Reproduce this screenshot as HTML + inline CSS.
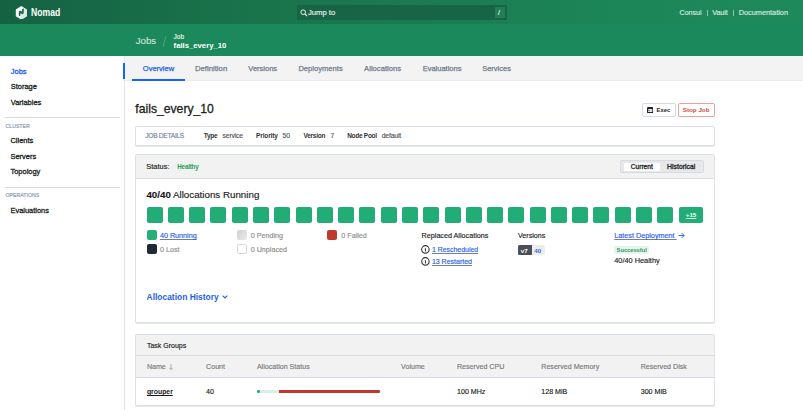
<!DOCTYPE html>
<html><head><meta charset="utf-8">
<style>
*{box-sizing:border-box}
html,body{margin:0;padding:0}
body{width:803px;height:410px;overflow:hidden;position:relative;background:#fff;font-family:"Liberation Sans",sans-serif;color:#0a0a0a}
.a{position:absolute}
.t{position:absolute;white-space:nowrap;line-height:10px;height:10px;margin-top:0.9px;-webkit-text-stroke:0.15px currentColor}
.b{-webkit-text-stroke:0}
.b{font-weight:bold}
#hdr{left:0;top:0;width:803px;height:24px;background:linear-gradient(to right,#156243 0%,#187049 25%,#1a7a50 50%,#1c8557 75%,#1e8a5b 100%)}
#sub{left:0;top:24px;width:803px;height:32px;background:#1b895b}
#side{left:0;top:56px;width:125px;height:354px;background:#fff;border-right:1px solid #e3e5e8}
#tabs{left:125px;top:56px;width:678px;height:25px;background:#f3f3f3;border-bottom:1px solid #ececec}
.side{font-size:7.45px;color:#1c1f24;-webkit-text-stroke:0.3px #1c1f24;margin-top:0.4px}
.sidesec{font-size:5.2px;color:#8797ae;transform:scaleY(1.16);transform-origin:0 50%}
.div{position:absolute;left:5px;width:115px;height:1px;background:#d6dbe3}
.tab{font-size:7.5px;color:#6f7b8c;top:63px;-webkit-text-stroke:0.25px #6f7b8c}
.box{position:absolute;border:1px solid #dbe0e8;border-radius:2px;background:#fff}
.kv{font-size:6.5px;top:130.2px;color:#333}
.kvv{font-size:6.8px;color:#555}
.sq{position:absolute;top:207px;width:16px;height:16px;border-radius:2px;background:#22ad77}
.leg{position:absolute;width:10px;height:10px;border-radius:2px}
.lt{font-size:7.2px;color:#8e8e8e}
.lnk{color:#1f60ec;text-decoration:underline;text-decoration-color:#6f7fa3;text-decoration-thickness:0.6px;text-underline-offset:1px}
.th{font-size:7.1px;color:#7a7a7a;top:361.5px}
.td{font-size:7.1px;color:#1c1c1c;top:386.4px}
</style></head><body>
<div id="hdr" class="a"></div>
<!-- logo -->
<svg class="a" style="left:14.6px;top:5.6px" width="12.6" height="13.6" viewBox="0 0 16 16" preserveAspectRatio="none">
<path d="M8,0 L15,4 V12 L8,16 L1,12 V4 Z" fill="#fff"/>
<path d="M8.9,3.95 L11.12,2.69 L15,4 V12 L8,16 L7,11.03 L7,8.4 L9.25,9.66 Z" fill="#dfe9e3"/>
<path d="M11.12,2.69 V8.58 L9.25,9.66 L7,8.4 V11.03 L4.88,12.34 V6.45 L6.57,5.42 L8.89,6.7 V3.95 Z" fill="#1a6b48"/>
</svg>
<div class="t b" style="left:30.9px;top:7.3px;font-size:10.0px;color:#fff;transform:scaleX(0.862);transform-origin:0 0">Nomad</div>
<!-- search -->
<div class="a" style="left:297px;top:5px;width:210px;height:15px;background:#176446;border-radius:1px"></div>
<svg class="a" style="left:299.5px;top:8.5px" width="8" height="8" viewBox="0 0 8 8"><circle cx="3.2" cy="3.2" r="2.3" stroke="#e8efe9" stroke-width="1" fill="none"/><line x1="4.9" y1="4.9" x2="7" y2="7" stroke="#e8efe9" stroke-width="1.1"/></svg>
<div class="t" style="left:307.9px;top:7px;font-size:7.7px;color:#e9f1ec">Jump to</div>
<div class="a" style="left:494.7px;top:7.1px;width:10px;height:10.8px;background:#237e58;border-radius:1px"></div>
<div class="t" style="left:498px;top:7.5px;font-size:7px;color:#e9f1ec">/</div>
<div class="t" style="left:679.6px;top:7.4px;font-size:7.04px;color:#dbe9e1">Consul</div>
<div class="a" style="left:707px;top:9.5px;width:0.7px;height:6.5px;background:#8fc2a8"></div>
<div class="t" style="left:712.2px;top:7.4px;font-size:7.1px;color:#dbe9e1">Vault</div>
<div class="a" style="left:733px;top:9.5px;width:0.7px;height:6.5px;background:#8fc2a8"></div>
<div class="t" style="left:738.7px;top:7.4px;font-size:7.33px;color:#dbe9e1">Documentation</div>

<div id="sub" class="a"></div>
<div class="t" style="left:135.8px;top:35.3px;font-size:9.6px;color:#c9e2d5">Jobs</div>
<div class="a" style="left:164.1px;top:36.2px;width:1.3px;height:10.5px;background:#45a87a;transform:skewX(-14deg)"></div>
<div class="t" style="left:173.6px;top:31.3px;font-size:6.5px;color:#e8f3ed">Job</div>
<div class="t b" style="left:173.6px;top:40.6px;font-size:7.71px;color:#fff">fails_every_10</div>

<div id="side" class="a"></div>
<div class="a" style="left:123px;top:63px;width:2px;height:16px;background:#1563ff"></div>
<div class="t side" style="left:10.8px;top:66.6px;color:#1f60ec;-webkit-text-stroke:0.3px #1f60ec">Jobs</div>
<div class="t side" style="left:10.8px;top:82px">Storage</div>
<div class="t side" style="left:10.8px;top:97.7px">Variables</div>
<div class="div" style="top:117.2px"></div>
<div class="t sidesec" style="left:5.5px;top:120.4px">CLUSTER</div>
<div class="t side" style="left:10.5px;top:135.3px">Clients</div>
<div class="t side" style="left:10.5px;top:151.6px">Servers</div>
<div class="t side" style="left:10.5px;top:167px">Topology</div>
<div class="div" style="top:187.2px"></div>
<div class="t sidesec" style="left:5.5px;top:189.6px">OPERATIONS</div>
<div class="t side" style="left:10.5px;top:206px">Evaluations</div>

<div id="tabs" class="a"></div>
<div class="t tab" style="left:142.8px;color:#1f60ec;-webkit-text-stroke:0.25px #1f60ec">Overview</div>
<div class="a" style="left:132px;top:79px;width:53px;height:2px;background:#1563ff"></div>
<div class="t tab" style="left:194.9px;font-size:7.75px">Definition</div>
<div class="t tab" style="left:248.3px">Versions</div>
<div class="t tab" style="left:298.4px;font-size:7.6px">Deployments</div>
<div class="t tab" style="left:364.1px;font-size:7.65px">Allocations</div>
<div class="t tab" style="left:422.7px">Evaluations</div>
<div class="t tab" style="left:482.2px">Services</div>

<div class="t" style="left:135.3px;top:103.2px;font-size:12.2px;color:#222;-webkit-text-stroke:0.3px #222">fails_every_10</div>

<!-- buttons -->
<div class="box" style="left:642px;top:103px;width:33.5px;height:13.5px;border-color:#d5dae2"></div>
<svg class="a" style="left:646.9px;top:106.7px" width="6.4" height="6.2" viewBox="0 0 6.4 6.2"><rect x="0" y="0" width="6.4" height="6.2" rx="1.3" fill="#1f2328"/><rect x="1.1" y="2.1" width="4.2" height="2.9" rx="0.3" fill="#e4e4e4"/><circle cx="2.1" cy="3.5" r="0.55" fill="#1f2328"/></svg>
<div class="t b" style="left:656.5px;top:104px;font-size:5.85px;color:#1f2328">Exec</div>
<div class="box" style="left:678px;top:103px;width:36.6px;height:13.5px;border-color:#eea098"></div>
<div class="t b" style="left:682.8px;top:104px;font-size:6.24px;color:#cf4a3e">Stop Job</div>

<!-- job details -->
<div class="box" style="left:135px;top:126px;width:579.5px;height:19.6px;box-shadow:0 1px 0 #e3e8ef"></div>
<div class="t" style="left:145.3px;top:130.5px;font-size:6.6px;letter-spacing:-0.27px;color:#7484a0">JOB DETAILS</div>
<div class="t b kv" style="left:203.8px;letter-spacing:-0.29px">Type</div>
<div class="t kv kvv" style="left:222.6px;letter-spacing:-0.19px">service</div>
<div class="t b kv" style="left:256.1px;letter-spacing:-0.15px">Priority</div>
<div class="t kv kvv" style="left:282.6px;letter-spacing:-0.2px">50</div>
<div class="t b kv" style="left:303.5px;letter-spacing:-0.25px">Version</div>
<div class="t kv kvv" style="left:330.4px">7</div>
<div class="t b kv" style="left:347.2px;letter-spacing:-0.28px">Node Pool</div>
<div class="t kv kvv" style="left:381.7px;letter-spacing:-0.16px">default</div>

<!-- status box -->
<div class="box" style="left:135px;top:154.3px;width:579.5px;height:169px;box-shadow:0 1px 0 #e3e8ef"></div>
<div class="a" style="left:136px;top:155.3px;width:577.5px;height:23.9px;background:#f2f2f2;border-bottom:1px solid #dbdde2"></div>
<div class="t" style="left:146.2px;top:161.5px;font-size:7.49px;color:#1c1c1c">Status:</div>
<div class="a" style="left:173.6px;top:162px;width:28.3px;height:9px;background:#eef4f0;border-radius:1.5px"></div><div class="t b" style="left:177.3px;top:161.3px;font-size:6.3px;letter-spacing:-0.22px;color:#2a9a5e">Healthy</div>
<div class="a" style="left:620px;top:160.2px;width:83.5px;height:13.2px;background:#e8e8e8;border:1px solid #d5dbe5;border-radius:1.5px"></div>
<div class="a" style="left:623.8px;top:162.7px;width:36.2px;height:8.2px;background:#fff;border-radius:1px"></div>
<div class="t" style="left:630.8px;top:161px;font-size:6.6px;color:#2a2f36;-webkit-text-stroke:0.35px #2a2f36">Current</div>
<div class="t" style="left:667.1px;top:161px;font-size:6.85px;color:#2a2f36;-webkit-text-stroke:0.35px #2a2f36">Historical</div>

<div class="t" style="left:146.4px;top:189.2px;font-size:9.77px;color:#1c1c1c"><b>40/40</b> Allocations Running</div>
<div class="sq" style="left:146.60px"></div><div class="sq" style="left:167.88px"></div><div class="sq" style="left:189.16px"></div><div class="sq" style="left:210.44px"></div><div class="sq" style="left:231.72px"></div><div class="sq" style="left:253.00px"></div><div class="sq" style="left:274.28px"></div><div class="sq" style="left:295.56px"></div><div class="sq" style="left:316.84px"></div><div class="sq" style="left:338.12px"></div><div class="sq" style="left:359.40px"></div><div class="sq" style="left:380.68px"></div><div class="sq" style="left:401.96px"></div><div class="sq" style="left:423.24px"></div><div class="sq" style="left:444.52px"></div><div class="sq" style="left:465.80px"></div><div class="sq" style="left:487.08px"></div><div class="sq" style="left:508.36px"></div><div class="sq" style="left:529.64px"></div><div class="sq" style="left:550.92px"></div><div class="sq" style="left:572.20px"></div><div class="sq" style="left:593.48px"></div><div class="sq" style="left:614.76px"></div><div class="sq" style="left:636.04px"></div><div class="sq" style="left:657.32px"></div><div class="sq" style="left:678.7px;width:24.8px"></div><div class="t b" style="left:685.8px;top:209.4px;font-size:6.2px;color:#fff;text-decoration:underline;text-underline-offset:0.9px;text-decoration-color:rgba(255,255,255,0.75)">+15</div>

<div class="leg" style="left:146.6px;top:230.3px;background:#25b07b"></div>
<div class="t lt lnk" style="left:159.9px;top:230.3px">40 Running</div>
<div class="leg" style="left:146.6px;top:244px;background:#1e2a35"></div>
<div class="t lt" style="left:159.9px;top:244px">0 Lost</div>
<div class="leg" style="left:236.8px;top:230.3px;background:linear-gradient(135deg,#d0d0d0,#ececec)"></div>
<div class="t lt" style="left:250.7px;top:230.3px">0 Pending</div>
<div class="leg" style="left:236.8px;top:244px;background:#fff;border:1px solid #d8d8d8"></div>
<div class="t lt" style="left:250.7px;top:244px">0 Unplaced</div>
<div class="leg" style="left:327.4px;top:230.3px;background:#c0392e"></div>
<div class="t lt" style="left:341.3px;top:230.3px">0 Failed</div>

<div class="t" style="left:421.6px;top:230.6px;font-size:7.2px;color:#1c1c1c">Replaced Allocations</div>
<svg class="a" style="left:421.1px;top:245.1px" width="8.8" height="8.8" viewBox="0 0 8.8 8.8"><circle cx="4.4" cy="4.4" r="3.75" stroke="#2f3338" stroke-width="1.05" fill="none"/><rect x="3.9" y="3.0" width="1" height="3.0" rx="0.4" fill="#2f3338"/><circle cx="4.4" cy="6.1" r="0.55" fill="#2f3338"/></svg>
<div class="t lnk" style="left:431.9px;top:244.3px;font-size:6.94px">1 Rescheduled</div>
<svg class="a" style="left:421.1px;top:257.1px" width="8.8" height="8.8" viewBox="0 0 8.8 8.8"><circle cx="4.4" cy="4.4" r="3.75" stroke="#2f3338" stroke-width="1.05" fill="none"/><rect x="3.9" y="3.0" width="1" height="3.0" rx="0.4" fill="#2f3338"/><circle cx="4.4" cy="6.1" r="0.55" fill="#2f3338"/></svg>
<div class="t lnk" style="left:431.9px;top:256.4px;font-size:7px">13 Restarted</div>

<div class="t" style="left:518px;top:230.6px;font-size:7.12px;color:#1c1c1c">Versions</div>
<div class="a" style="left:518px;top:245.2px;width:26.9px;height:9.8px;background:#ededed;border-radius:1.5px"></div>
<div class="a" style="left:518px;top:245.2px;width:13.5px;height:9.8px;background:#4b5058;border-radius:1.5px 0 0 1.5px"></div>
<div class="t b" style="left:520.8px;top:244.9px;font-size:6.2px;color:#fff">v7</div>
<div class="t b" style="left:534.2px;top:244.9px;font-size:6.2px;color:#2f68e0">40</div>

<div class="t lnk" style="left:614.2px;top:230.5px;font-size:7.26px">Latest Deployment&nbsp;</div>
<svg class="a" style="left:677.6px;top:232px" width="7" height="7" viewBox="0 0 7 7"><path d="M0.5,3.5 H6 M3.6,1 L6.1,3.5 L3.6,6" stroke="#1a5fe0" stroke-width="0.9" fill="none"/></svg>
<div class="a" style="left:614.2px;top:246px;width:34.4px;height:7.8px;background:#e8f5ee;border-radius:1.5px"></div>
<div class="t b" style="left:616.6px;top:243.9px;font-size:5.72px;color:#2a9a5e">Successful</div>
<div class="t" style="left:614.2px;top:255.1px;font-size:7.39px;color:#1c1c1c">40/40 Healthy</div>

<div class="t b" style="left:146.6px;top:291.1px;font-size:8.44px;color:#1f60ec">Allocation History</div>
<svg class="a" style="left:221.8px;top:295px" width="6" height="4" viewBox="0 0 6 4"><path d="M0.6,0.6 L3,3 L5.4,0.6" stroke="#1f60ec" stroke-width="1.1" fill="none"/></svg>

<!-- task groups -->
<div class="box" style="left:135px;top:334.3px;width:579.5px;height:71.3px;box-shadow:0 1px 0 #e3e8ef"></div>
<div class="a" style="left:136px;top:335.3px;width:577.5px;height:42.6px;background:#f2f2f2;border-bottom:1px solid #d3dbe8"></div>
<div class="a" style="left:136px;top:355px;width:577.5px;height:1px;background:#dcdcdc"></div>
<div class="t" style="left:146.9px;top:340px;font-size:7.02px;color:#1c1c1c">Task Groups</div>
<div class="t th" style="left:146.9px">Name</div><svg class="a" style="left:169.3px;top:363.5px" width="4" height="6.5" viewBox="0 0 4 6.5"><path d="M2,0 V5.5 M0.4,3.8 L2,5.6 L3.6,3.8" stroke="#a5a5a5" stroke-width="0.9" fill="none"/></svg>
<div class="t th" style="left:206.1px">Count</div>
<div class="t th" style="left:256.9px">Allocation Status</div>
<div class="t th" style="left:401.1px">Volume</div>
<div class="t th" style="left:457px">Reserved CPU</div>
<div class="t th" style="left:541.3px">Reserved Memory</div>
<div class="t th" style="left:640.7px">Reserved Disk</div>
<div class="t td b" style="left:146.9px;font-size:6.86px;text-decoration:underline">grouper</div>
<div class="t td" style="left:206.1px">40</div>
<div class="a" style="left:256.5px;top:389.8px;width:3px;height:3px;background:#25b07b;border-radius:1px"></div>
<div class="a" style="left:259.5px;top:389.8px;width:19px;height:3px;background:#d9efe4"></div>
<div class="a" style="left:279px;top:389.8px;width:101.2px;height:3px;background:#c4362b;border-radius:0 1px 1px 0"></div>
<div class="t td" style="left:457px">100 MHz</div>
<div class="t td" style="left:541.3px">128 MiB</div>
<div class="t td" style="left:640.7px">300 MiB</div>

</body></html>
